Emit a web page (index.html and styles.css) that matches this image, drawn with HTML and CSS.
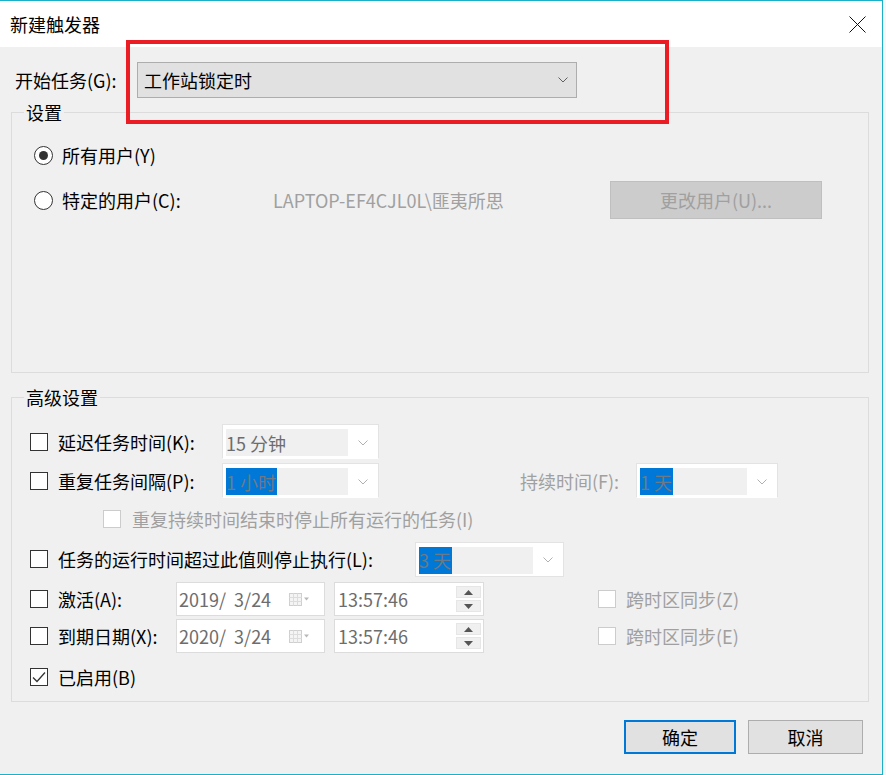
FILE: index.html
```html
<!DOCTYPE html>
<html lang="zh-CN">
  <head>
    <meta charset="utf-8">
    <title>新建触发器</title>
    <link rel="stylesheet" href="styles.css">
  </head>
  <body>
    <div class="window">
      <div class="titlebar">
        <span class="title">新建触发器</span>
        <svg class="close" width="17" height="17" viewBox="0 0 17 17"><path d="M0.5 0.5L16.5 16.5M16.5 0.5L0.5 16.5" stroke="#111" stroke-width="1"/></svg>
      </div>

      <div class="content">
        <div class="start-row">
          <span class="start-label">开始任务(G):</span>
          <div class="combo">
            <span>工作站锁定时</span>
            <svg width="10" height="6" viewBox="0 0 10 6"><path d="M0.5 0.5L5 5L9.5 0.5" fill="none" stroke="#606060"/></svg>
          </div>
        </div>

        <fieldset class="group group-settings">
          <legend>设置</legend>
          <div class="group-body">
            <div class="radio-row">
              <span class="radio on"></span>
              <span>所有用户(Y)</span>
            </div>
            <div class="radio-row radio-row-user">
              <span class="radio"></span>
              <span class="user-label">特定的用户(C):</span>
              <span class="user-name">LAPTOP-EF4CJL0L\匪夷所思</span>
              <span class="btn btn-disabled">更改用户(U)...</span>
            </div>
          </div>
        </fieldset>

        <fieldset class="group group-advanced">
          <legend>高级设置</legend>
          <div class="group-body">
            <div class="row row-delay">
              <span class="check"></span>
              <span class="label label-short">延迟任务时间(K):</span>
              <div class="dd">
                <div class="dd-value"><span>15 分钟</span></div>
                <div class="dd-arrow"><svg width="10" height="6" viewBox="0 0 10 6"><path d="M0.5 0.5L5 5L9.5 0.5" fill="none" stroke="#b0b0b0"/></svg></div>
              </div>
            </div>

            <div class="row row-repeat">
              <span class="check"></span>
              <span class="label label-short">重复任务间隔(P):</span>
              <div class="dd">
                <div class="dd-value"><span class="sel">1 小时</span></div>
                <div class="dd-arrow"><svg width="10" height="6" viewBox="0 0 10 6"><path d="M0.5 0.5L5 5L9.5 0.5" fill="none" stroke="#b0b0b0"/></svg></div>
              </div>
              <span class="label muted duration-label">持续时间(F):</span>
              <div class="dd dd-duration">
                <div class="dd-value"><span class="sel">1 天</span></div>
                <div class="dd-arrow"><svg width="10" height="6" viewBox="0 0 10 6"><path d="M0.5 0.5L5 5L9.5 0.5" fill="none" stroke="#b0b0b0"/></svg></div>
              </div>
            </div>

            <div class="row row-stop-all">
              <span class="check disabled"></span>
              <span class="muted">重复持续时间结束时停止所有运行的任务(I)</span>
            </div>

            <div class="row row-timeout">
              <span class="check"></span>
              <span class="label label-long">任务的运行时间超过此值则停止执行(L):</span>
              <div class="dd dd-timeout">
                <div class="dd-value"><span class="sel">3 天</span></div>
                <div class="dd-arrow"><svg width="10" height="6" viewBox="0 0 10 6"><path d="M0.5 0.5L5 5L9.5 0.5" fill="none" stroke="#b0b0b0"/></svg></div>
              </div>
            </div>

            <div class="row row-activate">
              <span class="check"></span>
              <span class="label label-date">激活(A):</span>
              <div class="picker date">
                <span class="picker-text">2019/  3/24</span>
                <svg class="cal" width="21" height="13" viewBox="0 0 21 13"><rect x="0.5" y="0.5" width="12" height="12" fill="#f4f4f4" stroke="#cfcfcf"/><path d="M0.5 4.5H12.5M0.5 8.5H12.5M4.5 0.5V12.5M8.5 0.5V12.5" stroke="#dcdcdc"/><path d="M15 4.5H20L17.5 7.5Z" fill="#b8b8b8"/></svg>
              </div>
              <div class="picker time">
                <span class="picker-text">13:57:46</span>
                <div class="spin">
                  <span class="spin-btn"><svg width="9" height="5" viewBox="0 0 9 5"><path d="M0 5H9L4.5 0Z" fill="#555"/></svg></span>
                  <span class="spin-btn"><svg width="9" height="5" viewBox="0 0 9 5"><path d="M0 0H9L4.5 5Z" fill="#555"/></svg></span>
                </div>
              </div>
              <span class="check disabled tz-check"></span>
              <span class="muted">跨时区同步(Z)</span>
            </div>

            <div class="row row-expire">
              <span class="check"></span>
              <span class="label label-date">到期日期(X):</span>
              <div class="picker date">
                <span class="picker-text">2020/  3/24</span>
                <svg class="cal" width="21" height="13" viewBox="0 0 21 13"><rect x="0.5" y="0.5" width="12" height="12" fill="#f4f4f4" stroke="#cfcfcf"/><path d="M0.5 4.5H12.5M0.5 8.5H12.5M4.5 0.5V12.5M8.5 0.5V12.5" stroke="#dcdcdc"/><path d="M15 4.5H20L17.5 7.5Z" fill="#b8b8b8"/></svg>
              </div>
              <div class="picker time">
                <span class="picker-text">13:57:46</span>
                <div class="spin">
                  <span class="spin-btn"><svg width="9" height="5" viewBox="0 0 9 5"><path d="M0 5H9L4.5 0Z" fill="#555"/></svg></span>
                  <span class="spin-btn"><svg width="9" height="5" viewBox="0 0 9 5"><path d="M0 0H9L4.5 5Z" fill="#555"/></svg></span>
                </div>
              </div>
              <span class="check disabled tz-check"></span>
              <span class="muted">跨时区同步(E)</span>
            </div>

            <div class="row row-enabled">
              <span class="check checked"><svg width="14" height="12" viewBox="0 0 14 12"><path d="M1 6.5L5 10.5L13 1.5" fill="none" stroke="#333" stroke-width="1.3"/></svg></span>
              <span class="label">已启用(B)</span>
            </div>
          </div>
        </fieldset>

        <div class="actions">
          <span class="btn btn-default">确定</span>
          <span class="btn">取消</span>
        </div>
      </div>

      <div class="callout"></div>
    </div>
  </body>
</html>
```

FILE: styles.css
```css
body {
  margin: 0;
  background: #f7f7f7;
  font-family: "Noto Sans CJK SC", sans-serif;
  font-size: 18px;
  line-height: 24px;
  color: #000;
}
.window {
  position: relative;
  width: 883px;
  height: 775px;
  box-sizing: border-box;
  border: 1px solid #1ab1c8;
  border-left: 0;
  background: #f0f0f0;
}
.titlebar {
  height: 46px;
  background: #fff;
  display: flex;
  align-items: center;
  justify-content: space-between;
  padding: 0 16px 0 10px;
}
.content {
  padding: 15px 13px 0 11px;
}

/* start task */
.start-row {
  display: flex;
  align-items: center;
  height: 36px;
  padding-left: 4px;
}
.start-label {
  width: 122px;
}
.combo {
  width: 440px;
  height: 36px;
  box-sizing: border-box;
  background: #e1e1e1;
  border: 1px solid #adadad;
  display: flex;
  align-items: center;
  justify-content: space-between;
  padding: 0 8px 0 6px;
}

/* group boxes */
.group {
  margin: 2px 0 0;
  padding: 0;
  border: 1px solid #dcdcdc;
  min-width: 0;
}
.group legend {
  margin-left: 12px;
  padding: 0 2px;
  line-height: 24px;
}
.group-settings .group-body {
  height: 248px;
  box-sizing: border-box;
  padding: 16px 0 0 22px;
}
.group-advanced {
  margin-top: 12px;
}
.group-advanced .group-body {
  height: 292px;
  box-sizing: border-box;
  padding-top: 15px;
}

/* radios */
.radio-row {
  display: flex;
  align-items: center;
  height: 30px;
}
.radio-row-user {
  height: 38px;
  margin-top: 11px;
}
.radio {
  width: 19px;
  height: 19px;
  box-sizing: border-box;
  border: 1.5px solid #333;
  border-radius: 50%;
  background: #fff;
  margin-right: 9px;
  display: flex;
  align-items: center;
  justify-content: center;
}
.radio.on::after {
  content: '';
  width: 9px;
  height: 9px;
  border-radius: 50%;
  background: #333;
}
.user-label {
  width: 211px;
}
.user-name {
  width: 337px;
  color: #a0a0a0;
}

/* buttons */
.btn {
  height: 34px;
  box-sizing: border-box;
  display: flex;
  align-items: center;
  justify-content: center;
  background: #e1e1e1;
  border: 1px solid #adadad;
  width: 115px;
}
.btn-disabled {
  width: 212px;
  height: 38px;
  background: #cccccc;
  border-color: #bfbfbf;
  color: #a0a0a0;
}
.btn-default {
  width: 112px;
  border: 2px solid #0078d7;
}
.actions {
  display: flex;
  justify-content: flex-end;
  gap: 12px;
  margin-top: 18px;
  padding-right: 6px;
}

/* advanced rows */
.row {
  display: flex;
  align-items: center;
  padding-left: 18px;
}
.row-delay {
  height: 35px;
}
.row-repeat {
  height: 35px;
  margin-top: 4px;
}
.row-stop-all {
  height: 42px;
  padding-left: 91px;
}
.row-stop-all .check {
  margin-right: 11px;
}
.row-timeout {
  height: 34px;
  margin-top: 2px;
}
.row-activate {
  height: 34px;
  margin-top: 6px;
}
.row-expire {
  height: 34px;
  margin-top: 3px;
}
.row-enabled {
  height: 48px;
}
.check {
  width: 18px;
  height: 18px;
  box-sizing: border-box;
  border: 1.5px solid #333;
  background: #fff;
  margin-right: 10px;
  flex: none;
  display: flex;
  align-items: center;
  justify-content: center;
}
.check.disabled {
  border: 1px solid #cccccc;
}
.label-short {
  width: 164px;
}
.label-long {
  width: 357px;
}
.label-date {
  width: 118px;
}
.muted {
  color: #a0a0a0;
}
.duration-label {
  margin-left: 141px;
  width: 116px;
}

/* disabled drop downs */
.dd {
  width: 157px;
  height: 35px;
  box-sizing: border-box;
  background: #fff;
  border: 1px solid #e3e3e3;
  border-bottom-color: #fff;
  display: flex;
  padding: 4px 0 2px 3px;
}
.dd-duration {
  width: 142px;
}
.dd-timeout {
  width: 149px;
  height: 35px;
  border-bottom-color: #e3e3e3;
}
.dd-value {
  flex: 1;
  background: #f0f0f0;
  color: #6d6d6d;
  display: flex;
  align-items: stretch;
}
.dd-value span {
  display: flex;
  align-items: center;
}
.dd-value .sel {
  background: #0078d7;
  color: #6d7a86;
  padding-right: 1px;
}
.dd-arrow {
  width: 30px;
  display: flex;
  align-items: center;
  justify-content: center;
}

/* date and time pickers */
.picker {
  height: 34px;
  box-sizing: border-box;
  background: #fff;
  border: 1px solid #dcdcdc;
  display: flex;
  align-items: center;
  color: #6d6d6d;
  padding-left: 2px;
}
.picker-text {
  white-space: pre;
}
.date {
  width: 149px;
}
.date .cal {
  margin-left: auto;
  margin-right: 14px;
}
.time {
  width: 150px;
  margin-left: 9px;
  padding-left: 3px;
}
.spin {
  margin-left: auto;
  margin-right: 2px;
  display: flex;
  flex-direction: column;
  gap: 2px;
}
.spin-btn {
  width: 25px;
  height: 12px;
  box-sizing: border-box;
  border: 1px solid #e6e6e6;
  background: #f0f0f0;
  display: flex;
  align-items: center;
  justify-content: center;
}
.tz-check {
  margin-left: 114px;
}

/* screenshot annotation */
.callout {
  position: absolute;
  left: 126px;
  top: 39px;
  width: 543px;
  height: 84px;
  box-sizing: border-box;
  border: 4px solid #ec1c24;
}
```
